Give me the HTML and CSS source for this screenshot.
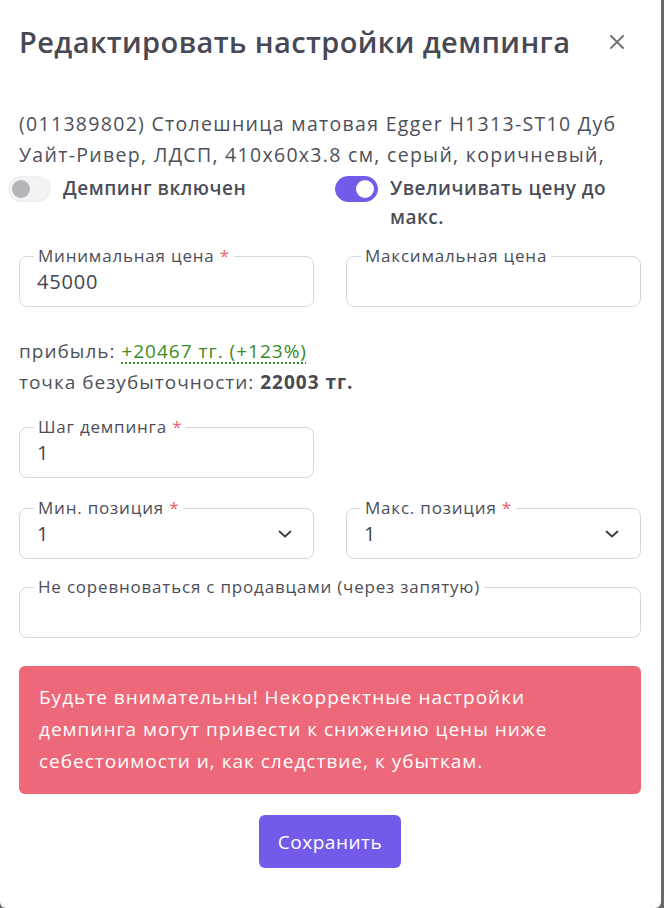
FILE: index.html
```html
<!DOCTYPE html>
<html lang="ru">
<head>
<meta charset="utf-8">
<link rel="stylesheet" href="styles.css">
</head>
<body>
<div class="modal">
  <div class="modal-header">
    <h2 class="modal-title">Редактировать настройки демпинга</h2>
    <button class="close" aria-label="Закрыть">
      <svg width="16" height="16" viewBox="0 0 16 16"><path d="M2 2 L14 14 M14 2 L2 14" stroke="#6b6b70" stroke-width="1.8" stroke-linecap="square"/></svg>
    </button>
  </div>
  <div class="modal-body">
    <p class="product">(011389802) Столешница матовая Egger H1313-ST10 Дуб Уайт-Ривер, ЛДСП, 410x60x3.8 см, серый, коричневый,</p>

    <div class="grid toggles">
      <label class="switch">
        <span class="track"><span class="knob"></span></span>
        <span class="switch-label">Демпинг включен</span>
      </label>
      <label class="switch">
        <span class="track on"><span class="knob"></span></span>
        <span class="switch-label">Увеличивать цену до макс.</span>
      </label>
    </div>

    <div class="grid row-first">
      <fieldset class="field">
        <legend>Минимальная цена <span class="req">*</span></legend>
        <div class="value">45000</div>
      </fieldset>
      <fieldset class="field">
        <legend>Максимальная цена</legend>
        <div class="value"></div>
      </fieldset>
    </div>

    <div class="stats">
      <div>прибыль: <span class="profit">+20467 тг. (+123%)</span></div>
      <div>точка безубыточности: <b>22003 тг.</b></div>
    </div>

    <div class="grid">
      <fieldset class="field">
        <legend>Шаг демпинга <span class="req">*</span></legend>
        <div class="value">1</div>
      </fieldset>
    </div>

    <div class="grid row-pos">
      <fieldset class="field">
        <legend>Мин. позиция <span class="req">*</span></legend>
        <div class="value select">1
          <svg width="14" height="8" viewBox="0 0 14 8"><path d="M1.5 1.5 L7 6.5 L12.5 1.5" fill="none" stroke="#3a3d45" stroke-width="1.8" stroke-linecap="round" stroke-linejoin="round"/></svg>
        </div>
      </fieldset>
      <fieldset class="field">
        <legend>Макс. позиция <span class="req">*</span></legend>
        <div class="value select">1
          <svg width="14" height="8" viewBox="0 0 14 8"><path d="M1.5 1.5 L7 6.5 L12.5 1.5" fill="none" stroke="#3a3d45" stroke-width="1.8" stroke-linecap="round" stroke-linejoin="round"/></svg>
        </div>
      </fieldset>
    </div>

    <fieldset class="field wide">
      <legend>Не соревноваться с продавцами (через запятую)</legend>
      <div class="value"></div>
    </fieldset>

    <div class="alert">Будьте внимательны! Некорректные настройки демпинга могут привести к снижению цены ниже себестоимости и, как следствие, к убыткам.</div>

    <div class="actions">
      <button class="btn">Сохранить</button>
    </div>
  </div>
</div>
</body>
</html>
```

FILE: styles.css
```css
* { box-sizing: border-box; }
html, body { margin: 0; padding: 0; }
body {
  background: #6a6a6a;
  font-family: "Open Sans", "Noto Sans", sans-serif;
  color: #4d505a;
  width: 664px;
  height: 908px;
  overflow: hidden;
}
.modal {
  width: 661px;
  height: 908px;
  background: #fff;
  border-radius: 0 0 6px 6px;
}
.modal-header {
  display: flex;
  align-items: center;
  justify-content: space-between;
  padding: 24px 36px 0 19px;
  height: 60px;
}
.modal-title {
  margin: 0;
  font-size: 29px;
  letter-spacing: 0.4px;
  font-weight: 600;
  line-height: 36px;
  color: #474955;
}
.close {
  border: 0;
  background: none;
  padding: 0;
  width: 16px;
  height: 16px;
  display: flex;
}
.modal-body {
  padding: 0 20px 0 19px;
}
.product {
  margin: 48px 0 0;
  font-size: 19.5px;
  letter-spacing: 1.3px;
  line-height: 31px;
  height: 62px;
  overflow: hidden;
}
.grid {
  display: grid;
  grid-template-columns: 1fr 1fr;
  column-gap: 32px;
}
.toggles {
  margin-top: 4px;
}
.switch {
  display: flex;
  align-items: flex-start;
  gap: 12px;
  margin-left: -11px;
}
.track {
  flex: none;
  width: 43px;
  height: 26px;
  border-radius: 13px;
  background: #f2f3f5;
  border: 1px solid #eceef1;
  display: flex;
  align-items: center;
  padding: 0 3px;
  margin-top: 2px;
}
.knob {
  width: 18px;
  height: 18px;
  border-radius: 50%;
  background: #b4b5b8;
}
.track.on {
  background: #735ae8;
  border-color: #735ae8;
  justify-content: flex-end;
}
.track.on .knob { background: #fff; }
.switch-label {
  font-size: 19px;
  letter-spacing: 0.5px;
  font-weight: 600;
  line-height: 29px;
  color: #4b4e58;
}
.field {
  margin: 0;
  border: 1px solid #d5d8dc;
  border-radius: 8px;
  padding: 0 17px 8px 17px;
  min-width: 0;
}
.field legend {
  margin-left: -3px;
  padding: 0 4px;
  font-size: 17px;
  letter-spacing: 0.8px;
  font-weight: 500;
  line-height: 20px;
  color: #4b4e58;
}
.req { color: #ef5b6c; }
.value {
  height: 32px;
  line-height: 32px;
  font-size: 20px;
  letter-spacing: 0.8px;
  color: #43464f;
}
.select {
  display: flex;
  align-items: center;
  justify-content: space-between;
  padding-right: 4px;
}
.row-first { margin-top: 14px; }
.stats {
  margin-top: 29px;
  font-size: 19px;
  letter-spacing: 1px;
  line-height: 31px;
  margin-bottom: 19px;
}
.profit {
  color: #3a8a25;
  text-decoration: underline dotted #3a8a25;
  text-decoration-thickness: 2px;
  text-underline-offset: 4px;
}
.stats b { font-weight: 700; color: #474955; }
.row-pos { margin-top: 20px; }
.wide { margin-top: 18px; }
.alert {
  margin-top: 28px;
  background: #ed6879;
  color: #fff;
  border-radius: 6px;
  padding: 15px 28px 17px 20px;
  font-size: 19px;
  letter-spacing: 1px;
  line-height: 32px;
}
.actions {
  display: flex;
  justify-content: center;
  margin-top: 21px;
}
.btn {
  font-family: inherit;
  background: #735ae8;
  color: #fff;
  border: 0;
  border-radius: 6px;
  height: 53px;
  padding: 0 19px;
  font-size: 19px;
  letter-spacing: 0.5px;
}
```
